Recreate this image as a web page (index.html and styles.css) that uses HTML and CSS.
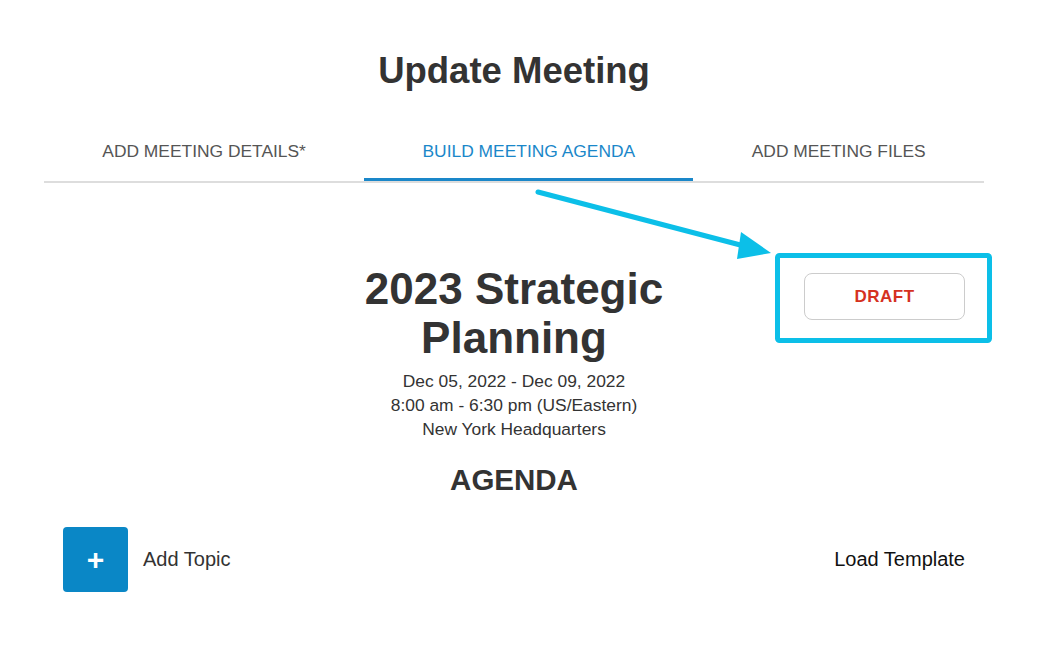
FILE: index.html
```html
<!DOCTYPE html>
<html lang="en">

<head>
    <meta charset="UTF-8">
    <meta name="viewport" content="width=device-width, initial-scale=1.0">
    <title>Update Meeting</title>
    <link rel="stylesheet" href="styles.css">
</head>

<body>
    <div class="page">
        <h1 class="page-title">Update Meeting</h1>

        <nav class="tabs">
            <a class="tab">ADD MEETING DETAILS*</a>
            <a class="tab active">BUILD MEETING AGENDA</a>
            <a class="tab">ADD MEETING FILES</a>
        </nav>

        <section class="meeting">
            <div></div>
            <div class="meeting-info">
                <h2 class="meeting-name">2023 Strategic Planning</h2>
                <p>Dec 05, 2022 - Dec 09, 2022</p>
                <p>8:00 am - 6:30 pm (US/Eastern)</p>
                <p>New York Headquarters</p>
            </div>
            <div class="status-col">
                <button class="status-btn">DRAFT</button>
            </div>
        </section>

        <h3 class="agenda-title">AGENDA</h3>

        <div class="agenda-actions">
            <div class="add-topic">
                <button class="plus-btn">+</button>
                <span>Add Topic</span>
            </div>
            <a class="load-template">Load Template</a>
        </div>
    </div>

    <!-- annotation: arrow + highlight box -->
    <svg class="annotation" width="1060" height="650" viewBox="0 0 1060 650">
        <line x1="538" y1="192" x2="748" y2="247" stroke="#0cbfe8" stroke-width="5" stroke-linecap="round" />
        <polygon points="741,232 771,253 737,259" fill="#0cbfe8" />
        <rect x="777.5" y="255.5" width="212" height="85" rx="2" fill="none" stroke="#0cbfe8" stroke-width="5" />
    </svg>
</body>

</html>
```

FILE: styles.css
```css
* {
    margin: 0;
    padding: 0;
    box-sizing: border-box;
}

body {
    font-family: "Liberation Sans", Arial, sans-serif;
    color: #333;
    background: #fff;
}

.page {
    width: 940px;
    margin-left: 44px;
}

.page-title {
    margin-top: 49px;
    font-size: 36.5px;
    line-height: 44px;
    text-align: center;
    color: #333;
}

.tabs {
    display: flex;
    margin-top: 30px;
    border-bottom: 2px solid #ddd;
}

.tab {
    flex: 1 1 auto;
    text-align: center;
    font-size: 17.4px;
    line-height: 24px;
    padding: 16px 0 15px;
    color: #555;
    border-bottom: 3px solid transparent;
    cursor: pointer;
}

.tab.active {
    color: #1a87c9;
    border-bottom-color: #1a87c9;
}

.meeting {
    display: grid;
    grid-template-columns: 1fr 1fr 1fr;
    margin-top: 81px;
}

.meeting-info {
    text-align: center;
    font-size: 17.4px;
    line-height: 24px;
}

.meeting-name {
    font-size: 44px;
    line-height: 49px;
    margin-bottom: 7px;
}

.status-col {
    display: flex;
    justify-content: flex-end;
    align-items: flex-start;
}

.status-btn {
    margin-top: 9px;
    margin-right: 19px;
    width: 161px;
    height: 47px;
    border: 1px solid #ccc;
    border-radius: 8px;
    background: #fff;
    color: #d5311f;
    font-family: inherit;
    font-weight: bold;
    font-size: 17px;
    letter-spacing: 0.5px;
}

.agenda-title {
    margin-top: 21px;
    text-align: center;
    font-size: 29.5px;
    line-height: 36px;
}

.agenda-actions {
    display: flex;
    justify-content: space-between;
    align-items: center;
    margin-top: 29px;
    padding: 0 19px;
}

.add-topic {
    display: flex;
    align-items: center;
    gap: 15px;
    font-size: 20px;
}

.plus-btn {
    width: 65px;
    height: 65px;
    border: none;
    border-radius: 4px;
    background: #0a87c6;
    color: #fff;
    font-family: inherit;
    font-size: 30px;
    font-weight: bold;
}

.load-template {
    font-size: 20px;
    color: #111;
}

.annotation {
    position: absolute;
    top: 0;
    left: 0;
    pointer-events: none;
}
```
